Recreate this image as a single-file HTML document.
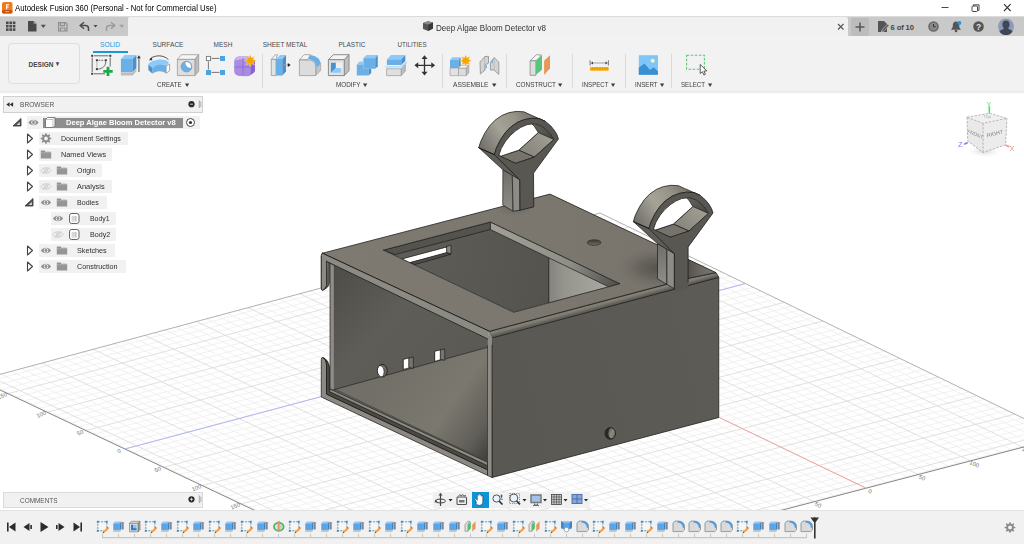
<!DOCTYPE html>
<html lang="en"><head><meta charset="utf-8"><title>Autodesk Fusion 360</title>
<style>
*{box-sizing:border-box;margin:0;padding:0}
html,body{width:1024px;height:544px;overflow:hidden;background:#fff}
body{font-family:"Liberation Sans",sans-serif;color:#3c3c3c;position:relative}
.abs{position:absolute}
#titlebar{left:0;top:0;width:1024px;height:16px;background:#fff}
#titlebar .t{left:14.5px;top:1.5px;line-height:12px;color:#000;white-space:nowrap;font-size:8.4px;transform:scaleX(0.931);transform-origin:0 50%}
#qbar{left:0;top:16px;width:1024px;height:20.5px;background:#c9c9c9;border-top:1px solid #dcdcdc}
#tab{left:128px;top:17px;width:720px;height:19px;background:#f1f1f1;border-radius:2px 2px 0 0}
#tab .t{left:307.5px;top:4.5px;line-height:12px;color:#333;white-space:nowrap;font-size:8.8px;transform:scaleX(0.9144);transform-origin:0 50%}
#plus{left:851px;top:18px;width:18px;height:18px;background:#bcbcbc;border-radius:2px}
#toolbar{left:0;top:36px;width:1024px;height:58px;background:linear-gradient(#f2f2f2 0,#f2f2f2 54px,#e8e8e8 56.3px,#fff 57.6px)}
.tabs span{position:absolute;top:39.5px;line-height:9px;color:#4a4a4a;white-space:nowrap}
.grp{position:absolute;top:80px;line-height:9px;color:#3c3c3c;white-space:nowrap}
.grp i{font-style:normal;font-size:6.5px;margin-left:4.5px;position:relative;top:-0.3px;display:inline-block;transform:scaleX(1.5)}
.sep{position:absolute;top:54px;width:1px;height:34px;background:#dadada}
#design{left:8px;top:43px;width:72px;height:41px;border:1px solid #dedede;border-radius:4px;background:#f3f3f3}
#design span{position:absolute;left:35px;top:15.5px;line-height:9px;font-weight:bold;color:#444;white-space:nowrap;font-size:7.8px;transform:translateX(-50%) scaleX(0.8359)}
.ico{position:absolute;overflow:visible}
.row{position:absolute;height:13px;background:#f1f1f1}
.row span{position:absolute;top:2px;line-height:9px;color:#2e2e2e;white-space:nowrap}
.phead{position:absolute;left:3px;width:199.5px;height:16.5px;background:#f1f1f1;border:1px solid #d0d0d0}
.phead span{position:absolute;left:15.5px;top:3px;line-height:9px;color:#555;white-space:nowrap}
#tl{left:0;top:510px;width:1024px;height:34px;background:#f1f1f1;border-top:1px solid #e2e2e2}
#nav{left:433px;top:492px;width:157px;height:16px;background:#f1f1f1}
</style></head><body>
<svg class="ico" style="left:0;top:93px" width="1024" height="417" viewBox="0 93 1024 417" font-family="Liberation Sans, sans-serif"><path d="M-15.5 382.6L605.5 215.7M-7.7 386.3L613.3 219.4M0.1 390L621.1 223.2M15.8 397.4L636.7 230.8M23.6 401.1L644.5 234.6M31.4 404.8L652.3 238.3M39.2 408.5L660.1 242.1M54.8 415.8L675.6 249.7M62.6 419.5L683.4 253.4M70.3 423.2L691.2 257.2M78.1 426.9L698.9 261M93.7 434.3L714.5 268.5M101.5 437.9L722.2 272.3M109.2 441.6L730 276M117 445.3L737.7 279.8M132.6 452.6L753.2 287.3M140.3 456.3L761 291.1M148.1 460L768.7 294.8M155.8 463.6L776.5 298.6M171.3 471L791.9 306.1M179.1 474.6L799.7 309.8M186.8 478.3L807.4 313.6M194.6 482L815.1 317.3M210 489.3L830.5 324.8M217.8 492.9L838.3 328.5M225.5 496.6L846 332.3M233.2 500.2L853.7 336M248.7 507.5L869.1 343.5M256.4 511.2L876.8 347.2M264.1 514.8L884.5 350.9M271.8 518.5L892.2 354.7M287.2 525.8L907.6 362.1M294.9 529.4L915.2 365.8M302.6 533.1L922.9 369.6M310.3 536.7L930.6 373.3M325.7 544L945.9 380.7M333.4 547.6L953.6 384.4M341 551.2L961.3 388.2M348.7 554.9L968.9 391.9M364.1 562.1L984.3 399.3M371.7 565.8L991.9 403M379.4 569.4L999.6 406.7M387.1 573L1007.2 410.4M402.4 580.3L1022.5 417.8M410.1 583.9L1030.1 421.5M417.7 587.5L1037.8 425.2M425.4 591.1L1045.4 428.9M440.6 598.4L1060.6 436.3M-19.5 379.6L443.5 598.6M1 374.1L464 593.3M11.2 371.3L474.2 590.6M21.5 368.6L484.4 587.9M31.7 365.8L494.7 585.2M52.2 360.3L515.1 579.9M62.5 357.5L525.4 577.2M72.8 354.8L535.6 574.5M83.1 352L545.9 571.9M103.6 346.5L566.4 566.5M113.9 343.7L576.7 563.8M124.2 341L587 561.1M134.5 338.2L597.3 558.4M155.1 332.6L617.8 553.1M165.4 329.9L628.1 550.4M175.7 327.1L638.4 547.7M186.1 324.3L648.7 545M206.7 318.8L669.4 539.6M217 316L679.7 536.9M227.4 313.2L690 534.2M237.7 310.4L700.3 531.5M258.4 304.9L721 526.1M268.8 302.1L731.3 523.4M279.2 299.3L741.7 520.7M289.5 296.5L752 518M310.3 290.9L772.8 512.6M320.7 288.1L783.1 509.9M331 285.3L793.5 507.2M341.4 282.5L803.9 504.4M362.2 276.9L824.6 499M372.6 274.1L835 496.3M383.1 271.3L845.4 493.6M393.5 268.5L855.8 490.9M414.3 262.9L876.6 485.4M424.8 260.1L887.1 482.7M435.2 257.3L897.5 480M445.6 254.5L907.9 477.3M466.5 248.9L928.8 471.8M477 246.1L939.2 469.1M487.4 243.3L949.6 466.4M497.9 240.5L960.1 463.6M518.9 234.8L981 458.2M529.3 232L991.5 455.4M539.8 229.2L1001.9 452.7M550.3 226.4L1012.4 450M571.3 220.7L1033.4 444.5M581.8 217.9L1043.8 441.7M592.3 215.1L1054.3 439" stroke="#eeeeee" stroke-width="0.8" fill="none"/><path d="M7.9 393.7L628.9 227M47 412.2L667.8 245.9M85.9 430.6L706.7 264.7M124.8 449L745.5 283.5M163.6 467.3L784.2 302.3M202.3 485.6L822.8 321M240.9 503.9L861.4 339.7M279.5 522.1L899.9 358.4M318 540.3L938.3 377M356.4 558.5L976.6 395.6M394.7 576.6L1014.8 414.1M433 594.7L1053 432.6M-9.2 376.8L453.7 595.9M42 363.1L504.9 582.6M93.3 349.3L556.2 569.2M144.8 335.4L607.5 555.7M196.4 321.5L659 542.3M248.1 307.6L710.7 528.8M299.9 293.7L762.4 515.3M351.8 279.7L814.3 501.7M403.9 265.7L866.2 488.2M456.1 251.7L918.3 474.5M508.4 237.6L970.5 460.9M560.8 223.5L1022.9 447.2" stroke="#dcdcdc" stroke-width="0.9" fill="none"/><polyline points="-21,380 600,213 1062,437" fill="none" stroke="#a8a8a8" stroke-width="0.9"/><polyline points="-21,380 442,599 1062,437" fill="none" stroke="#858585" stroke-width="1"/><path d="M124.8 449L745.5 283.5" stroke="#b2b6f6" stroke-width="1"/><path d="M403.9 265.7L866.2 488.2" stroke="#f2a3a3" stroke-width="1"/><text x="2.9" y="397.7" font-size="5.8" fill="#7a7a7a" text-anchor="middle" transform="rotate(-22 2.9 397.7)">150</text><text x="42" y="416.2" font-size="5.8" fill="#7a7a7a" text-anchor="middle" transform="rotate(-22 42 416.2)">100</text><text x="80.9" y="434.6" font-size="5.8" fill="#7a7a7a" text-anchor="middle" transform="rotate(-22 80.9 434.6)">50</text><text x="119.8" y="453" font-size="5.8" fill="#7a7a7a" text-anchor="middle" transform="rotate(-22 119.8 453)">0</text><text x="158.6" y="471.3" font-size="5.8" fill="#7a7a7a" text-anchor="middle" transform="rotate(-22 158.6 471.3)">50</text><text x="197.3" y="489.6" font-size="5.8" fill="#7a7a7a" text-anchor="middle" transform="rotate(-22 197.3 489.6)">100</text><text x="235.9" y="507.9" font-size="5.8" fill="#7a7a7a" text-anchor="middle" transform="rotate(-22 235.9 507.9)">150</text><text x="817.3" y="506.7" font-size="5.8" fill="#7a7a7a" text-anchor="middle" transform="rotate(25 817.3 506.7)">50</text><text x="869.2" y="493.2" font-size="5.8" fill="#7a7a7a" text-anchor="middle" transform="rotate(25 869.2 493.2)">0</text><text x="921.3" y="479.5" font-size="5.8" fill="#7a7a7a" text-anchor="middle" transform="rotate(25 921.3 479.5)">50</text><text x="973.5" y="465.9" font-size="5.8" fill="#7a7a7a" text-anchor="middle" transform="rotate(25 973.5 465.9)">100</text><text x="1025.9" y="452.2" font-size="5.8" fill="#7a7a7a" text-anchor="middle" transform="rotate(25 1025.9 452.2)">150</text><defs><linearGradient id="topg" gradientUnits="userSpaceOnUse" x1="330" y1="260" x2="700" y2="260"><stop offset="0" stop-color="#7e7a72"/><stop offset="0.6" stop-color="#7b776f"/><stop offset="1" stop-color="#78746c"/></linearGradient><radialGradient id="ao" gradientUnits="userSpaceOnUse" cx="658" cy="268" r="44" gradientTransform="translate(658 268) scale(1 0.5) translate(-658 -268)"><stop offset="0" stop-color="#4f4d48" stop-opacity="0.85"/><stop offset="0.45" stop-color="#55534e" stop-opacity="0.5"/><stop offset="1" stop-color="#77746c" stop-opacity="0"/></radialGradient><radialGradient id="ao1" gradientUnits="userSpaceOnUse" cx="515" cy="207" r="22" gradientTransform="translate(515 207) scale(1 0.45) translate(-515 -207)"><stop offset="0" stop-color="#55534e" stop-opacity="0.8"/><stop offset="1" stop-color="#77746c" stop-opacity="0"/></radialGradient><linearGradient id="rf" gradientUnits="userSpaceOnUse" x1="492" y1="400" x2="719" y2="340"><stop offset="0" stop-color="#5a5852"/><stop offset="1" stop-color="#5d5b55"/></linearGradient><linearGradient id="fil" gradientUnits="userSpaceOnUse" x1="600" y1="300" x2="602" y2="307.5"><stop offset="0" stop-color="#6c6961"/><stop offset="0.5" stop-color="#848177"/><stop offset="1" stop-color="#5c5a54"/></linearGradient><linearGradient id="wall" gradientUnits="userSpaceOnUse" x1="335" y1="270" x2="470" y2="390"><stop offset="0" stop-color="#4f4d48"/><stop offset="0.4" stop-color="#5f5d57"/><stop offset="1" stop-color="#5b5953"/></linearGradient><linearGradient id="floor" gradientUnits="userSpaceOnUse" x1="380" y1="380" x2="487" y2="455"><stop offset="0" stop-color="#726f68"/><stop offset="0.55" stop-color="#7b786f"/><stop offset="0.85" stop-color="#605e58"/><stop offset="1" stop-color="#454340"/></linearGradient><linearGradient id="cutwall" gradientUnits="userSpaceOnUse" x1="400" y1="260" x2="548" y2="300"><stop offset="0" stop-color="#5f5d57"/><stop offset="1" stop-color="#55534e"/></linearGradient><linearGradient id="brw" gradientUnits="userSpaceOnUse" x1="548" y1="280" x2="612" y2="280"><stop offset="0" stop-color="#82817b"/><stop offset="0.25" stop-color="#95948d"/><stop offset="1" stop-color="#acaba3"/></linearGradient><linearGradient id="brs" gradientUnits="userSpaceOnUse" x1="495" y1="230" x2="620" y2="285"><stop offset="0" stop-color="#a09f97"/><stop offset="0.6" stop-color="#8f8e87"/><stop offset="1" stop-color="#4e4c47"/></linearGradient><linearGradient id="ao2" gradientUnits="userSpaceOnUse" x1="688" y1="0" x2="714" y2="0"><stop offset="0" stop-color="#504e49" stop-opacity="0.9"/><stop offset="1" stop-color="#6b6962" stop-opacity="0.1"/></linearGradient></defs><polygon points="491.5,337.5 718.75,277.3 718.75,417.5 492,477.5" fill="url(#rf)" stroke="#1f1e1c" stroke-width="0.8" stroke-linejoin="round"/><clipPath id="rh"><ellipse cx="610.3" cy="433.4" rx="5.2" ry="5.8"/></clipPath><linearGradient id="rhg" x1="0" y1="0" x2="1" y2="0.3"><stop offset="0" stop-color="#55534e"/><stop offset="0.5" stop-color="#8e8c84"/><stop offset="1" stop-color="#5f5d57"/></linearGradient><ellipse cx="610.3" cy="433.4" rx="5.2" ry="5.8" fill="#2b2a27"/><g clip-path="url(#rh)"><ellipse cx="613.2" cy="432.6" rx="4.8" ry="6.2" fill="url(#rhg)" transform="rotate(12 613.2 432.6)"/></g><ellipse cx="610.3" cy="433.4" rx="5.2" ry="5.8" fill="none" stroke="#1e1e1c" stroke-width="0.9"/><polygon points="489.4,331.3 689.2,278.2 716,272.6 718.75,277.3 492,338" fill="url(#fil)" stroke="#1f1e1c" stroke-width="0.7" stroke-linejoin="round"/><polygon points="334.4,265.2 487.5,338.9 487.5,347.3 335,389.4" fill="url(#wall)"/><polygon points="335,389.4 487.5,347.3 487.5,461.3" fill="url(#floor)"/><polyline points="335,389.4 487.5,347.3" fill="none" stroke="#1f1e1c" stroke-width="0.8" stroke-linejoin="round" stroke-linecap="round"/><clipPath id="ch"><ellipse cx="382.3" cy="370.7" rx="5" ry="6.3"/></clipPath><ellipse cx="382.3" cy="370.7" rx="5" ry="6.3" fill="#6b6963"/><g clip-path="url(#ch)"><ellipse cx="379.8" cy="371.8" rx="4.3" ry="6.3" fill="#fff" stroke="#2a2926" stroke-width="0.7"/></g><ellipse cx="382.3" cy="370.7" rx="5" ry="6.3" fill="none" stroke="#1e1e1c" stroke-width="0.9"/><polygon points="403.5,359.4 408.8,358 408.8,367.4 403.5,368.8" fill="#ffffff"/><polygon points="408.8,358 413.3,356.9 413.3,368.4 408.8,367.4" fill="#77756e" stroke="#1f1e1c" stroke-width="0.7" stroke-linejoin="round"/><polyline points="403.2,369.2 403.2,359.4 408.8,358" fill="none" stroke="#1f1e1c" stroke-width="0.7" stroke-linejoin="round" stroke-linecap="round"/><polygon points="435,351.3 440.3,349.9 440.3,359.3 435,360.7" fill="#ffffff"/><polygon points="440.3,349.9 444.8,348.8 444.8,360.3 440.3,359.3" fill="#77756e" stroke="#1f1e1c" stroke-width="0.7" stroke-linejoin="round"/><polyline points="434.7,361.1 434.7,351.3 440.3,349.9" fill="none" stroke="#1f1e1c" stroke-width="0.7" stroke-linejoin="round" stroke-linecap="round"/><path d="M321.3 359.5 Q321.3 357 323.3 357.6 Q326.2 359.5 326.5 364 L326.5 394.07 L487.5 469.77 L487.5 475.37 L321.25 397 Z" fill="#8b8982" stroke="#1f1e1c" stroke-width="0.75" stroke-linejoin="round"/><path d="M323.3 357.6 Q328 360 329.4 366.5 L329.4 391.54 L487.5 465.67 L487.5 469.77 L326.5 394.07 L326.5 364 Q326.2 359.5 323.3 357.6 Z" fill="#4b4a45" stroke="#1f1e1c" stroke-width="0.9" stroke-linejoin="round"/><polygon points="329.4,391.54 487.5,465.67 487.5,462.17 330.5,388.96" fill="#8a8a82" stroke="#1f1e1c" stroke-width="0.7" stroke-linejoin="round"/><polygon points="330.5,388.96 487.5,462.17 487.5,461.3 335,389.4 334.4,389.2" fill="#6b6963" stroke="#1f1e1c" stroke-width="0.6" stroke-linejoin="round"/><polygon points="487.5,338.2 492,338 492,477.5 487.5,475.4" fill="#8e8c85" stroke="#1f1e1c" stroke-width="0.7" stroke-linejoin="round"/><polygon points="330,262.5 334.4,264.8 334.4,390.4 330,388.9" fill="#8e8c85" stroke="#1f1e1c" stroke-width="0.7" stroke-linejoin="round"/><path d="M321.3 256 L321.3 288 Q321.3 291 323.5 290 Q327.5 288.5 329.4 283.5 L329.4 262 L326.5 260.5 Z" fill="#5d5b55" stroke="#1f1e1c" stroke-width="0.7"/><path d="M321.3 255.5 Q321.3 253 323.5 253.4 L327.5 261.5 L326.5 285.5 Q325 289.5 322.5 290.3 Q321.3 290.3 321.3 288 Z" fill="#8b8b83"/><path d="M326.5 261.3 L326.5 285.5 Q325 289.5 322.5 290.3 Q321.3 290.3 321.3 288 L321.3 255.5 Q321.3 253.2 322.8 253.2" fill="none" stroke="#1f1e1c" stroke-width="0.8" stroke-linejoin="round"/><clipPath id="cut"><polygon points="383.5,250.1 490.4,222 620,283.75 513.75,312.25"/></clipPath><g clip-path="url(#cut)"><polygon points="383.5,250.1 490.4,222 620,283.75 513.75,312.25" fill="url(#cutwall)"/><polygon points="548.75,240 640,283 548.75,304" fill="url(#brw)"/><polyline points="548.75,250 548.75,304" fill="none" stroke="#1f1e1c" stroke-width="0.8" stroke-linejoin="round" stroke-linecap="round"/><polygon points="383.5,250.1 490.4,222 490.4,229.5 395,254.6" fill="#55534d" stroke="#1f1e1c" stroke-width="0.7" stroke-linejoin="round"/><polygon points="490.4,222 620,283.75 609,286.95 490.4,229.5" fill="url(#brs)" stroke="#1f1e1c" stroke-width="0.7" stroke-linejoin="round"/><polygon points="402.3,258.9 446.6,247.3 446.6,252.6 409.8,262.6" fill="#ffffff"/><polygon points="446.6,246.4 451,245.2 451,253.9 446.6,252.6" fill="#8a8880" stroke="#1f1e1c" stroke-width="0.7" stroke-linejoin="round"/><polygon points="409.8,262.6 446.6,252.6 451,254.3 414.8,264.6" fill="#4d4b46" stroke="#1f1e1c" stroke-width="0.7" stroke-linejoin="round"/><polyline points="398,260 446.6,247" fill="none" stroke="#1f1e1c" stroke-width="0.7" stroke-linejoin="round" stroke-linecap="round"/></g><path d="M322.5,253.2 L489.4,331.3 L689.2,278.2 L716,272.6 L550,194.1Z M383.5,250.1 L490.4,222 L620,283.75 L513.75,312.25Z" fill="url(#topg)" fill-rule="evenodd"/><clipPath id="topc"><path d="M322.5,253.2 L489.4,331.3 L689.2,278.2 L716,272.6 L550,194.1Z M383.5,250.1 L490.4,222 L620,283.75 L513.75,312.25Z" clip-rule="evenodd"/></clipPath><g clip-path="url(#topc)"><rect x="600" y="235" width="120" height="60" fill="url(#ao)"/><polygon points="688,258 716.5,272.6 688,279" fill="url(#ao2)"/><rect x="480" y="190" width="70" height="30" fill="url(#ao1)"/></g><polyline points="322.5,253.2 489.4,331.3 689.2,278.2 716,272.6 550,194.1 322.5,253.2" fill="none" stroke="#1f1e1c" stroke-width="0.8" stroke-linejoin="round" stroke-linecap="round"/><polyline points="383.5,250.1 490.4,222 620,283.75 513.75,312.25 383.5,250.1" fill="none" stroke="#1f1e1c" stroke-width="0.8" stroke-linejoin="round" stroke-linecap="round"/><linearGradient id="thg" x1="0" y1="0" x2="0" y2="1"><stop offset="0" stop-color="#3f3e3a"/><stop offset="0.55" stop-color="#55534e"/><stop offset="1" stop-color="#75736b"/></linearGradient><ellipse cx="594.1" cy="242.6" rx="6.8" ry="2.8" fill="url(#thg)" stroke="#2a2926" stroke-width="0.7"/><polygon points="489.4,331.3 492.3,338.3 492,345 487.5,345 487.5,338" fill="#8c8b84"/><polygon points="322.5,253.2 489.4,331.3 487.5,338.9 326.3,261.3" fill="#8b8b83"/><polyline points="322.5,253.2 489.4,331.3" fill="none" stroke="#1f1e1c" stroke-width="0.95" stroke-linejoin="round" stroke-linecap="round"/><polyline points="326.5,261.4 487.5,338.9" fill="none" stroke="#1f1e1c" stroke-width="0.95" stroke-linejoin="round" stroke-linecap="round"/><polygon points="494.4,154.6 519.8,179.85 502.9,169.85 478.8,147.7" fill="#5f5d57" stroke="#1f1e1c" stroke-width="0.7" stroke-linejoin="round"/><linearGradient id="stg1" x1="0" y1="0" x2="0" y2="1"><stop offset="0" stop-color="#6f6e68"/><stop offset="1" stop-color="#8f8e88"/></linearGradient><polygon points="502.9,169.85 512.3,175.4 513.1,211.2 502.75,205" fill="url(#stg1)" stroke="#1f1e1c" stroke-width="0.7" stroke-linejoin="round"/><polygon points="512.3,175.4 519.8,179.85 520,210.2 513.1,211.2" fill="#8d8c86" stroke="#1f1e1c" stroke-width="0.7" stroke-linejoin="round"/><linearGradient id="og1" gradientUnits="userSpaceOnUse" x1="478.4" y1="144.6" x2="545.4" y2="99.4"><stop offset="0" stop-color="#716f68"/><stop offset="0.12" stop-color="#83817a"/><stop offset="0.33" stop-color="#a5a297"/><stop offset="0.55" stop-color="#979489"/><stop offset="0.8" stop-color="#716f68"/><stop offset="1" stop-color="#585650"/></linearGradient><polygon points="478.8,147.7 480.7,141.45 485.05,132.7 489.8,125.7 495.05,120.2 501.8,115.5 508.8,112.7 516.3,111.4 523.8,111.8 529.8,114.5 545.4,121.4 539.4,118.7 531.9,118.3 524.4,119.6 517.4,122.4 510.65,127.1 505.4,132.6 500.65,139.6 496.3,148.35 494.4,154.6" fill="url(#og1)" stroke="#1f1e1c" stroke-width="0.8" stroke-linejoin="round"/><path d="M494.4,154.6 L496.3,148.35 L500.65,139.6 L505.4,132.6 L510.65,127.1 L517.4,122.4 L524.4,119.6 L531.9,118.3 L539.4,118.7 L545.4,121.4 L550.65,125.85 L554.4,130.4 L556.9,134.6 L558.4,139 L533.5,173.1 L533.75,206.9 L520,210.2 L519.8,179.85Z M498.8,155.4 L501.3,148.35 L505.65,141.1 L510.4,135.4 L515.65,130.85 L520.9,127.3 L526.9,124.7 L534.4,123.6 L541.9,126.3 L546.4,129.7 L549.9,133.1 L553.9,139.5 L534.4,157.1 L515.65,163.35Z" fill="#595751" fill-rule="evenodd"/><clipPath id="rc1"><polygon points="498.8,155.4 501.3,148.35 505.65,141.1 510.4,135.4 515.65,130.85 520.9,127.3 526.9,124.7 534.4,123.6 541.9,126.3 546.4,129.7 549.9,133.1 553.9,139.5 534.4,157.1 515.65,163.35"/></clipPath><g clip-path="url(#rc1)"><polygon points="498.8,155.4 501.3,148.35 505.65,141.1 510.4,135.4 515.65,130.85 520.9,127.3 526.9,124.7 534.4,123.6 541.9,126.3 546.4,129.7 549.9,133.1 553.9,139.5 534.4,157.1 515.65,163.35" fill="#4b4944"/><linearGradient id="ic1" gradientUnits="userSpaceOnUse" x1="534.4" y1="123.6" x2="553.9" y2="139.5"><stop offset="0" stop-color="#65635d"/><stop offset="1" stop-color="#45433f"/></linearGradient><polygon points="498.8,155.4 501.3,148.35 505.65,141.1 510.4,135.4 515.65,130.85 520.9,127.3 526.9,124.7 534.4,123.6 541.9,126.3 546.4,129.7 549.9,133.1 553.9,139.5 534.4,157.1 515.65,163.35" fill="url(#ic1)"/><linearGradient id="fb1" gradientUnits="userSpaceOnUse" x1="534.4" y1="157.1" x2="553.9" y2="139.5"><stop offset="0" stop-color="#8c8a80"/><stop offset="1" stop-color="#a19e93"/></linearGradient><polygon points="553.9,139.5 534.4,157.1 518.8,150.2 538.3,132.6" fill="url(#fb1)" stroke="#1f1e1c" stroke-width="0.7" stroke-linejoin="round"/><polygon points="534.4,157.1 515.65,163.35 500.05,156.45 518.8,150.2" fill="#75736c" stroke="#1f1e1c" stroke-width="0.7" stroke-linejoin="round"/><polygon points="483.2,148.5 485.7,141.45 490.05,134.2 494.8,128.5 500.05,123.95 505.3,120.4 511.3,117.8 518.8,116.7 526.3,119.4 530.8,122.8 534.3,126.2 538.3,132.6 518.8,150.2 500.05,156.45" fill="#ffffff" stroke="#1f1e1c" stroke-width="0.8" stroke-linejoin="round"/></g><polyline points="498.8,155.4 501.3,148.35 505.65,141.1 510.4,135.4 515.65,130.85 520.9,127.3 526.9,124.7 534.4,123.6 541.9,126.3 546.4,129.7 549.9,133.1 553.9,139.5 534.4,157.1 515.65,163.35 498.8,155.4" fill="none" stroke="#1f1e1c" stroke-width="0.8" stroke-linejoin="round" stroke-linecap="round"/><polyline points="478.8,147.7 494.4,154.6 494.4,154.6 496.3,148.35 500.65,139.6 505.4,132.6 510.65,127.1 517.4,122.4 524.4,119.6 531.9,118.3 539.4,118.7 545.4,121.4 550.65,125.85 554.4,130.4 556.9,134.6 558.4,139 533.5,173.1 533.75,206.9 520,210.2" fill="none" stroke="#1f1e1c" stroke-width="0.8" stroke-linejoin="round" stroke-linecap="round"/><polyline points="494.4,154.6 519.8,179.85 520,210.2" fill="none" stroke="#1f1e1c" stroke-width="0.8" stroke-linejoin="round" stroke-linecap="round"/><polygon points="649,228.5 674.4,253.75 657.5,243.75 633.4,221.6" fill="#5f5d57" stroke="#1f1e1c" stroke-width="0.7" stroke-linejoin="round"/><linearGradient id="stg2" x1="0" y1="0" x2="0" y2="1"><stop offset="0" stop-color="#6f6e68"/><stop offset="1" stop-color="#8f8e88"/></linearGradient><polygon points="657.5,243.75 666.9,249.3 666.9,284.4 657.5,278.75" fill="url(#stg2)" stroke="#1f1e1c" stroke-width="0.7" stroke-linejoin="round"/><polygon points="666.9,249.3 674.4,253.75 674.4,288.75 666.9,284.4" fill="#8d8c86" stroke="#1f1e1c" stroke-width="0.7" stroke-linejoin="round"/><linearGradient id="og2" gradientUnits="userSpaceOnUse" x1="633" y1="218.5" x2="700" y2="173.3"><stop offset="0" stop-color="#716f68"/><stop offset="0.12" stop-color="#83817a"/><stop offset="0.33" stop-color="#a5a297"/><stop offset="0.55" stop-color="#979489"/><stop offset="0.8" stop-color="#716f68"/><stop offset="1" stop-color="#585650"/></linearGradient><polygon points="633.4,221.6 635.3,215.35 639.65,206.6 644.4,199.6 649.65,194.1 656.4,189.4 663.4,186.6 670.9,185.3 678.4,185.7 684.4,188.4 700,195.3 694,192.6 686.5,192.2 679,193.5 672,196.3 665.25,201 660,206.5 655.25,213.5 650.9,222.25 649,228.5" fill="url(#og2)" stroke="#1f1e1c" stroke-width="0.8" stroke-linejoin="round"/><path d="M649,228.5 L650.9,222.25 L655.25,213.5 L660,206.5 L665.25,201 L672,196.3 L679,193.5 L686.5,192.2 L694,192.6 L700,195.3 L705.25,199.75 L709,204.3 L711.5,208.5 L713,212.9 L688.1,247 L688.1,288.5 L674.4,291.75 L674.4,253.75Z M653.4,229.3 L655.9,222.25 L660.25,215 L665,209.3 L670.25,204.75 L675.5,201.2 L681.5,198.6 L689,197.5 L696.5,200.2 L701,203.6 L704.5,207 L708.5,213.4 L689,231 L670.25,237.25Z" fill="#595751" fill-rule="evenodd"/><clipPath id="rc2"><polygon points="653.4,229.3 655.9,222.25 660.25,215 665,209.3 670.25,204.75 675.5,201.2 681.5,198.6 689,197.5 696.5,200.2 701,203.6 704.5,207 708.5,213.4 689,231 670.25,237.25"/></clipPath><g clip-path="url(#rc2)"><polygon points="653.4,229.3 655.9,222.25 660.25,215 665,209.3 670.25,204.75 675.5,201.2 681.5,198.6 689,197.5 696.5,200.2 701,203.6 704.5,207 708.5,213.4 689,231 670.25,237.25" fill="#4b4944"/><linearGradient id="ic2" gradientUnits="userSpaceOnUse" x1="689" y1="197.5" x2="708.5" y2="213.4"><stop offset="0" stop-color="#65635d"/><stop offset="1" stop-color="#45433f"/></linearGradient><polygon points="653.4,229.3 655.9,222.25 660.25,215 665,209.3 670.25,204.75 675.5,201.2 681.5,198.6 689,197.5 696.5,200.2 701,203.6 704.5,207 708.5,213.4 689,231 670.25,237.25" fill="url(#ic2)"/><linearGradient id="fb2" gradientUnits="userSpaceOnUse" x1="689" y1="231" x2="708.5" y2="213.4"><stop offset="0" stop-color="#8c8a80"/><stop offset="1" stop-color="#a19e93"/></linearGradient><polygon points="708.5,213.4 689,231 673.4,224.1 692.9,206.5" fill="url(#fb2)" stroke="#1f1e1c" stroke-width="0.7" stroke-linejoin="round"/><polygon points="689,231 670.25,237.25 654.65,230.35 673.4,224.1" fill="#75736c" stroke="#1f1e1c" stroke-width="0.7" stroke-linejoin="round"/><polygon points="637.8,222.4 640.3,215.35 644.65,208.1 649.4,202.4 654.65,197.85 659.9,194.3 665.9,191.7 673.4,190.6 680.9,193.3 685.4,196.7 688.9,200.1 692.9,206.5 673.4,224.1 654.65,230.35" fill="#ffffff" stroke="#1f1e1c" stroke-width="0.8" stroke-linejoin="round"/></g><polyline points="653.4,229.3 655.9,222.25 660.25,215 665,209.3 670.25,204.75 675.5,201.2 681.5,198.6 689,197.5 696.5,200.2 701,203.6 704.5,207 708.5,213.4 689,231 670.25,237.25 653.4,229.3" fill="none" stroke="#1f1e1c" stroke-width="0.8" stroke-linejoin="round" stroke-linecap="round"/><polyline points="633.4,221.6 649,228.5 649,228.5 650.9,222.25 655.25,213.5 660,206.5 665.25,201 672,196.3 679,193.5 686.5,192.2 694,192.6 700,195.3 705.25,199.75 709,204.3 711.5,208.5 713,212.9 688.1,247 688.1,282" fill="none" stroke="#1f1e1c" stroke-width="0.8" stroke-linejoin="round" stroke-linecap="round"/><polyline points="649,228.5 674.4,253.75 674.4,288.75" fill="none" stroke="#1f1e1c" stroke-width="0.8" stroke-linejoin="round" stroke-linecap="round"/><defs><filter id="cb" x="-10%" y="-10%" width="120%" height="120%"><feGaussianBlur stdDeviation="0.35"/></filter><radialGradient id="csh"><stop offset="0" stop-color="#bbb" stop-opacity="0.6"/><stop offset="1" stop-color="#fff" stop-opacity="0"/></radialGradient></defs><ellipse cx="984.4" cy="151.2" rx="19" ry="7" fill="url(#csh)"/><g filter="url(#cb)"><polygon points="967,117.2 989.5,113.3 1006.9,118.4 983.1,123.3" fill="#f0f0f0"/><polygon points="967,117.2 983.1,123.3 983.1,152.5 967.7,141" fill="#e9e9e9"/><polygon points="983.1,123.3 1006.9,118.4 1005.6,144.8 983.1,152.5" fill="#ececec"/><path d="M967,117.2 L989.5,113.3 L1006.9,118.4 L983.1,123.3Z M967,117.2 L967.7,141 L983.1,152.5 L1005.6,144.8 L1006.9,118.4 M983.1,123.3 L983.1,152.5" fill="none" stroke="#a8a8a8" stroke-width="0.8" stroke-dasharray="2.5 1.3"/><text x="974.7" y="135.8" font-size="4.8" fill="#8a8a8a" text-anchor="middle" transform="rotate(22 974.7 135.8)">FRONT</text><text x="995.3" y="135.2" font-size="5.3" fill="#777" text-anchor="middle" transform="rotate(-14 995.3 135.2)">RIGHT</text><text x="987" y="118.2" font-size="3.8" fill="#aaa" text-anchor="middle" transform="rotate(12 987 118.2)">TOP</text><path d="M989.3 113.3L989.3 106.2" stroke="#5fd86a" stroke-width="1.6"/><path d="M967.7 142.6L964.2 144.2" stroke="#7b7ff0" stroke-width="1.6"/><path d="M1005.6 145.2L1009.5 146.7" stroke="#f09090" stroke-width="1.6"/><text x="988.9" y="106.9" font-size="6.5" fill="#5fd86a" text-anchor="middle">Y</text><text x="960.3" y="147" font-size="7.5" fill="#7b7ff0" text-anchor="middle">Z</text><text x="1012" y="150.6" font-size="7.5" fill="#f09090" text-anchor="middle">X</text></g></svg>

<div id="titlebar" class="abs">
<svg class="ico" style="left:2px;top:2px" width="11" height="12" viewBox="0 0 11 12"><rect x="0" y="0" width="10.5" height="11.5" rx="2" fill="#f27a1a"/><rect x="0" y="8" width="10.5" height="3.5" rx="1.5" fill="#c9520c"/><path d="M4 2.2h3v1.1H5.2v1.1h1.5v1.1H5.2v1.8H4z" fill="#fff"/><rect x="3.2" y="9" width="4" height="1.2" fill="#e8a060"/></svg>
<div class="abs t">Autodesk Fusion 360 (Personal - Not for Commercial Use)</div>
<svg class="ico" style="left:938px;top:2px" width="80" height="12" viewBox="0 0 80 12" fill="none" stroke="#333" stroke-width=".9"><path d="M3.5 5.5h7"/><rect x="34" y="4" width="5.5" height="5.5" rx="1" /><path d="M35.5 4v-1.2h5.5v5.5h-1.3"/><path d="M66 2.2l6.6 6.8M72.6 2.2l-6.6 6.8" stroke-width="1.1"/></svg>
</div>

<div id="qbar" class="abs"></div>
<div id="tab" class="abs">
<svg class="ico" style="left:294px;top:3px" width="12" height="12" viewBox="0 0 12 12"><path d="M1 3l5-1.8 5 1.3v6L6.2 11 1 9z" fill="#555"/><path d="M1 3l5.2 1.7L11 2.5 6 1.2z" fill="#8a8a8a"/><path d="M6.2 4.7V11L11 8.5v-6z" fill="#3a3a3a"/></svg>
<div class="abs t">Deep Algae Bloom Detector v8</div>
<svg class="ico" style="left:709px;top:6px" width="8" height="8" viewBox="0 0 8 8" stroke="#555" stroke-width="1.1"><path d="M1 1l5.5 5.5M6.5 1L1 6.5"/></svg>
</div>
<div id="plus" class="abs"><svg class="ico" style="left:4px;top:4px" width="10" height="10" viewBox="0 0 10 10" stroke="#5a5a5a" stroke-width="1.6"><path d="M5 0.5v9M0.5 5h9"/></svg></div>
<!-- quick access icons -->
<svg class="ico" style="left:0;top:17px" width="128" height="19" viewBox="0 0 128 19">
<g fill="#4a4a4a"><rect x="6" y="4.5" width="2.6" height="2.6"/><rect x="9.4" y="4.5" width="2.6" height="2.6"/><rect x="12.8" y="4.5" width="2.6" height="2.6"/><rect x="6" y="7.9" width="2.6" height="2.6"/><rect x="9.4" y="7.9" width="2.6" height="2.6"/><rect x="12.8" y="7.9" width="2.6" height="2.6"/><rect x="6" y="11.3" width="2.6" height="2.6"/><rect x="9.4" y="11.3" width="2.6" height="2.6"/><rect x="12.8" y="11.3" width="2.6" height="2.6"/></g>
<path d="M28 4h5.5l3 3v7.5H28z" fill="#4a4a4a"/><path d="M33.5 4v3h3z" fill="#8c8c8c"/>
<path d="M40.8 7.8h5l-2.5 3.1z" fill="#4f4f4f"/>
<g fill="none" stroke="#8e8e8e" stroke-width="1.2"><path d="M58.6 5.6h7l1.4 1.4v7h-8.4z"/><path d="M60.5 5.6v3h4v-3M60.5 14v-3h4.5v3"/></g>
<path d="M81 8.5h4.5a3 3 0 0 1 3 3v2.5" fill="none" stroke="#4a4a4a" stroke-width="1.5"/><path d="M84 5.2L80.2 8.5 84 11.8" fill="none" stroke="#4a4a4a" stroke-width="1.5"/>
<path d="M93.5 8h4l-2 2.6z" fill="#4a4a4a"/>
<path d="M114 8.5h-4.5a3 3 0 0 0-3 3v2.5" fill="none" stroke="#9a9a9a" stroke-width="1.4"/><path d="M111 5.2l3.8 3.3-3.8 3.3" fill="none" stroke="#9a9a9a" stroke-width="1.4"/>
<path d="M119.3 7.8h5l-2.5 3.1z" fill="#a2a2a2"/>
</svg>
<!-- right side status icons -->
<svg class="ico" style="left:874px;top:17px" width="150" height="19" viewBox="0 0 150 19">
<path d="M4 4h6l3 3v8H4z" fill="#555"/><path d="M8 13l5.5-6 1.5 1.5-5.5 6-2 .500z" fill="#555" stroke="#c9c9c9" stroke-width=".7"/>
<text x="16.5" y="12.6" font-family="Liberation Sans, sans-serif" font-size="7.6" font-weight="bold" fill="#444" letter-spacing="-0.1">6 of 10</text>
<circle cx="59.5" cy="9.5" r="5.3" fill="#6a6a6a"/><circle cx="59.5" cy="9.5" r="3.7" fill="#8a8a8a"/><path d="M59.5 7v2.8h2.2" fill="none" stroke="#333" stroke-width="1"/>
<path d="M82 4.5c2.3 0 3.2 1.8 3.2 4 0 1.8.600 2.8 1.5 3.6v.700h-9.4v-.700c.900-.800 1.5-1.8 1.5-3.6 0-2.2.900-4 3.2-4z" fill="#555"/><circle cx="82" cy="14" r="1.3" fill="#555"/><circle cx="85.3" cy="6" r="2" fill="#1a9be0"/>
<circle cx="104.5" cy="9.5" r="5.3" fill="#555"/><text x="104.5" y="12.7" text-anchor="middle" font-family="Liberation Sans, sans-serif" font-size="8.5" font-weight="bold" fill="#e0e0e0">?</text>
<circle cx="132" cy="9.5" r="8" fill="#8e9bb8"/><path d="M132 3.5c2.4 0 3.6 1.7 3.6 3.9 0 1.5-.500 2.6-1.2 3.3v1.3c1.8.500 3.5 1.4 4.2 2.6a8 8 0 0 1-13.2 0c.700-1.2 2.4-2.1 4.2-2.6v-1.3c-.700-.700-1.2-1.8-1.2-3.3 0-2.2 1.2-3.9 3.6-3.9z" fill="#3f4756"/>
</svg>

<div id="toolbar" class="abs"></div>
<div class="tabs">
<span style="left:110px;color:#1a97d9;font-size:7.8px;transform:translateX(-50%) scaleX(0.8545)">SOLID</span>
<span style="left:167.5px;font-size:7.8px;transform:translateX(-50%) scaleX(0.8417)">SURFACE</span>
<span style="left:223px;font-size:7.8px;transform:translateX(-50%) scaleX(0.8322)">MESH</span>
<span style="left:285px;font-size:7.8px;transform:translateX(-50%) scaleX(0.8327)">SHEET METAL</span>
<span style="left:352px;font-size:7.8px;transform:translateX(-50%) scaleX(0.8308)">PLASTIC</span>
<span style="left:411.5px;font-size:7.8px;transform:translateX(-50%) scaleX(0.8034)">UTILITIES</span>
</div>
<div class="abs" style="left:93px;top:51px;width:35px;height:2px;background:#1a97d9"></div>
<div id="design" class="abs"><span>DESIGN <i style="font-style:normal;font-size:6.5px;position:relative;top:-0.5px;margin-left:1px">&#9662;</i></span></div>
<div class="grp" style="left:157px;font-size:7.8px;transform:scaleX(0.7891);transform-origin:0 50%">CREATE<i>&#9662;</i></div>
<div class="grp" style="left:335.5px;font-size:7.8px;transform:scaleX(0.8078);transform-origin:0 50%">MODIFY<i>&#9662;</i></div>
<div class="grp" style="left:452.75px;font-size:7.8px;transform:scaleX(0.8443);transform-origin:0 50%">ASSEMBLE<i>&#9662;</i></div>
<div class="grp" style="left:516.25px;font-size:7.8px;transform:scaleX(0.8171);transform-origin:0 50%">CONSTRUCT<i>&#9662;</i></div>
<div class="grp" style="left:582px;font-size:7.8px;transform:scaleX(0.7841);transform-origin:0 50%">INSPECT<i>&#9662;</i></div>
<div class="grp" style="left:635px;font-size:7.8px;transform:scaleX(0.7908);transform-origin:0 50%">INSERT<i>&#9662;</i></div>
<div class="grp" style="left:680.75px;font-size:7.8px;transform:scaleX(0.7909);transform-origin:0 50%">SELECT<i>&#9662;</i></div>
<div class="sep" style="left:262px"></div><div class="sep" style="left:441.5px"></div><div class="sep" style="left:506px"></div>
<div class="sep" style="left:572px"></div><div class="sep" style="left:625px"></div><div class="sep" style="left:671px"></div>
<svg class="ico" style="left:0;top:36px" width="1024" height="57" viewBox="0 36 1024 57">
<!-- 1 create sketch -->
<g fill="none" stroke="#5a5a5a" stroke-width=".9">
<path d="M94 55.8h14.5M92.2 57.5v14.5M94 73.8h11M110.2 57.5v9"/>
<path d="M98.5 60.3h6" stroke-dasharray="1.8 1"/><path d="M96.9 62v5.5" stroke="#aaa"/><path d="M105.8 61.5c0 4.5-3.5 7.3-7.5 7.6"/>
</g>
<g fill="#3c3c3c"><rect x="91.2" y="54.8" width="2" height="2"/><rect x="109.3" y="54.8" width="2" height="2"/><rect x="91.2" y="72.8" width="2" height="2"/><rect x="95.9" y="59.3" width="2" height="2"/><rect x="104.8" y="59.3" width="2" height="2"/><rect x="95.9" y="68.1" width="2" height="2"/></g>
<path d="M108 66.7v9.4M103.3 71.4h9.4" stroke="#1fa84a" stroke-width="2.8"/>
<!-- 2 extrude -->
<path d="M120.9 59.1l3.8-4.1h11.7l-3.7 4.1z" fill="#8ccafc"/><path d="M120.9 59.1h11.8v13.1h-11.8z" fill="#6aafe6"/><path d="M132.7 59.1l3.7-4.1v13.1l-3.7 4.1z" fill="#4a90cf"/>
<path d="M120.9 72.5h11.8l3.7-4.1v2.8l-3.7 4.4h-11.8z" fill="#bdbdbd"/>
<path d="M138.9 58v13.9" stroke="#8e8e8e" stroke-width="1.6"/><path d="M137 58.2l1.9-3 1.9 3z" fill="#333"/>
<!-- 3 revolve -->
<path d="M148.4 64.4c1-4 17-8 20.6-1.6l-2.8 3.5c-3-3-10-3-13.8 1.8z" fill="#8ccafc"/>
<path d="M152.4 68.1c3.8-4.8 10.8-4.8 13.8-1.8l-.3 7c-3.5-2.8-10-2.8-13.5.5z" fill="#6aafe6"/>
<path d="M148.4 64.4l4 3.7v5.7l-4-3.8z" fill="#4a90cf"/>
<path d="M166.2 66.3l3.4-2.2v6.5l-3.4 2.8z" fill="#fff" stroke="#777" stroke-width=".6"/>
<path d="M168.4 59.7c-4.5-5-13.5-5-18.5-.8" fill="none" stroke="#444" stroke-width=".9"/><path d="M148.8 60.3l3-2.6.5 2.6z" fill="#333"/>
<!-- 4 hole -->
<path d="M177.4 59.4l4-4.7h17.3l-3.8 4.7z" fill="#f5f5f5" stroke="#999" stroke-width=".8" stroke-linejoin="round"/><path d="M194.9 59.4l3.8-4.7v16.5l-3.8 4.4z" fill="#bdbdbd" stroke="#999" stroke-width=".8" stroke-linejoin="round"/><path d="M177.4 59.4h17.5v16.2h-17.5z" fill="#dedede" stroke="#999" stroke-width=".8" stroke-linejoin="round"/>
<circle cx="186.5" cy="66.6" r="5.3" fill="#6aafe6" stroke="#999" stroke-width="1"/><path d="M185.5 62.2a4.6 4.6 0 0 1 5.5 5.6c-3 .3-5.7-2.3-5.5-5.6z" fill="#fff"/>
<!-- 5 pattern -->
<path d="M211.5 58.4h8M208.4 61.5v8M211.5 72.4h8" stroke="#777" stroke-width="1" fill="none"/>
<rect x="206.4" y="56.4" width="4.2" height="4.2" fill="#fff" stroke="#777" stroke-width=".9"/><rect x="220" y="56" width="5" height="5" fill="#4da3e0"/><rect x="206" y="70" width="5" height="5" fill="#4da3e0"/><rect x="220" y="70" width="5" height="5" fill="#4da3e0"/>
<!-- 6 form -->
<path d="M234.2 62c0-3 1.5-5 4-5.5l6-.5c3-.2 5 .5 6.5 1.5l3 2.5c1 1 1.3 2 1.3 3.5v6c0 1.5-.5 2.5-1.5 3.3l-3.5 2.7c-1 .6-2 .8-3.5.7l-7-.2c-3-.2-5.3-2-5.3-5z" fill="#a98be3"/>
<path d="M250.7 61.5l4.3-1.5v9.5c0 1.5-.5 2.5-1.5 3.3l-2.8 2.2z" fill="#8a63cf"/>
<path d="M235.5 58.5c2.5-2 6-2.5 9-2.5 3 0 5 .8 6.2 1.7l-1.5 2.3c-3.5-1-9-1-13.7.5z" fill="#c9b5f0"/>
<path d="M243 58v17.5M234.5 67h16" stroke="#8d6bd0" stroke-width=".8" fill="none"/>
<path d="M250.3 54.7l1.2 3.1 3-1.4-1.3 3 3.1 1.3-3.1 1.2 1.3 3.1-3-1.4-1.2 3.1-1.2-3.1-3 1.4 1.3-3.1-3.1-1.2 3.1-1.3-1.3-3 3 1.4z" fill="#f7a500" stroke="#fbe3b0" stroke-width=".4"/>
<!-- 7 press pull -->
<path d="M271.3 59.4l4.1-4.7h2l-1.4 4.7z" fill="#f5f5f5" stroke="#999" stroke-width=".8" stroke-linejoin="round"/><path d="M271.3 59.4h4.7v16.2h-4.7z" fill="#e2e2e2" stroke="#999" stroke-width=".8" stroke-linejoin="round"/>
<path d="M276 59l4.1-4h5.9l-3.7 4z" fill="#8ccafc"/><path d="M276 59h6.3v16.6h-6.3z" fill="#6aafe6"/><path d="M282.3 59l3.7-4v16.6l-3.7 4z" fill="#4a90cf"/>
<path d="M284.2 65h4" stroke="#aaa" stroke-width="1.3"/><path d="M287.8 63l2.8 2-2.8 2z" fill="#222"/>
<!-- 8 fillet -->
<path d="M299.4 60l4.7-5.3h6.3l-2.5 4.8z" fill="#f5f5f5" stroke="#999" stroke-width=".8" stroke-linejoin="round"/>
<path d="M315.7 68.1l5-4.7v7.2l-5 5z" fill="#c4c4c4" stroke="#999" stroke-width=".6" stroke-linejoin="round"/>
<path d="M299.4 60h9.6c4.5 .3 6.7 3.5 6.7 8.1v7.5h-16.3z" fill="#dcdcdc" stroke="#999" stroke-width=".8" stroke-linejoin="round"/>
<path d="M310.4 54.9c6 1 10 4 10.3 8.5l-4.3 4.1c-.5-5-3-7.7-8.5-8.4z" fill="#6aafe6"/>
<!-- 9 shell -->
<path d="M328.4 59.7l5-5h15.6l-4.7 5z" fill="#f5f5f5" stroke="#8c8c8c" stroke-width="1" stroke-linejoin="round"/><path d="M344.3 59.7l4.7-5v15.9l-4.7 5z" fill="#c0c0c0" stroke="#8c8c8c" stroke-width="1" stroke-linejoin="round"/><path d="M328.4 59.7h15.9v15.9h-15.9z" fill="#e2e2e2" stroke="#8c8c8c" stroke-width="1" stroke-linejoin="round"/>
<path d="M330.9 62.8h5v5.3l-5 4.7z" fill="#4a90cf"/><path d="M330.9 72.8l5-4.7h5v4.7z" fill="#8ccafc"/><path d="M335.9 62.8h6.2v5.3h-6.2z" fill="#f0f0f0"/>
<!-- 10 combine -->
<path d="M363.4 58.1l3.1-3.1h11.25l-2.5 3.1z" fill="#8ccafc"/><path d="M363.4 58.1h11.85v10.65h-11.85z" fill="#6aafe6"/><path d="M375.25 58.1l2.5-3.1v11.25l-2.5 2.5z" fill="#4a90cf"/>
<path d="M356.8 64.4l2.8-2.8h3.8v2.8z" fill="#8ccafc"/><path d="M356.8 64.4h6.6v4.35h5.3v6.85h-11.9z" fill="#6aafe6"/><path d="M368.7 68.75h2.3l-2.3 2.5z M368.7 68.75l2.5 0 0 4.3-2.5 2.55z" fill="#4a90cf"/>
<!-- 11 split -->
<path d="M386.9 59.4l4-4.4h14.4l-4 4.4z" fill="#8ccafc"/><path d="M386.9 59.4h14.4v5.6h-14.4z" fill="#6aafe6"/><path d="M401.3 59.4l4-4.4v6l-4 4z" fill="#4a90cf"/>
<path d="M386.6 68.75h14.7v6.85h-14.7z" fill="#e0e0e0" stroke="#999" stroke-width=".7"/><path d="M401.3 68.75l4-4.3v6.6l-4 4.5z" fill="#bdbdbd" stroke="#999" stroke-width=".7"/>
<path d="M385.3 66.9l16.3-.3 5.3-4.7" fill="none" stroke="#a9d4f5" stroke-width="1.4"/>
<!-- 12 move -->
<path d="M424.5 57.5v15.6M417 65.3h15.5" stroke="#333" stroke-width="1.3"/><path d="M421.5 59l3-3.8 3 3.8zM421.5 71.8l3 3.8 3-3.8zM418.2 62.3l-3.8 3 3.8 3zM431.3 62.3l3.8 3-3.8 3z" fill="#333"/>
<!-- 13 new component -->
<path d="M450 60l2.2-2.8h8.5l-2.2 2.8z" fill="#8ccafc"/><path d="M450 60h8.5v8.1h-8.5z" fill="#6aafe6"/><path d="M458.5 60l2.2-2.8v8l-2.2 2.9z" fill="#4a90cf"/>
<path d="M450 68.1h8.5v7.5h-8.5z" fill="#e2e2e2" stroke="#999" stroke-width=".6"/><path d="M458.5 68.1h7.8v7.5h-7.8z" fill="#dcdcdc" stroke="#999" stroke-width=".6"/><path d="M458.5 68.1l2.5-2.8h7.8l-2.5 2.8z" fill="#f5f5f5" stroke="#999" stroke-width=".6"/><path d="M466.3 68.1l2.5-2.8v7.5l-2.5 2.8z" fill="#bdbdbd" stroke="#999" stroke-width=".6"/>
<path d="M465.7 54.7l1.2 3.1 3-1.4-1.3 3 3.1 1.3-3.1 1.2 1.3 3.1-3-1.4-1.2 3.1-1.2-3.1-3 1.4 1.3-3.1-3.1-1.2 3.1-1.3-1.3-3 3 1.4z" fill="#f7a500" stroke="#fbe3b0" stroke-width=".4"/>
<!-- 14 joint -->
<path d="M480 61.9l4.75-5.3 3.75-.35v6.85l-3.5 1.9v5l-4.6 4z" fill="#d4d4d4" stroke="#8c8c8c" stroke-width=".8" stroke-linejoin="round"/><path d="M484.75 56.6v13.4" stroke="#aaa" stroke-width=".6"/>
<path d="M490.4 62.5l3.7-5 4.7 4.7v12.2l-4.7-4.4h-3.7z" fill="#d4d4d4" stroke="#8c8c8c" stroke-width=".8" stroke-linejoin="round"/><path d="M494.1 57.5v12.5" stroke="#aaa" stroke-width=".6"/>
<path d="M486.3 65.3v3M492.2 60.3v3" stroke="#5db0ee" stroke-width="1.2"/>
<!-- 15 construct -->
<path d="M530.1 60.8l6.3-6.1 5.2.5-5.7 5.6z" fill="#f5f5f5" stroke="#8c8c8c" stroke-width=".8" stroke-linejoin="round"/><path d="M530.1 60.8h5.8v14.5h-5.8z" fill="#dedede" stroke="#8c8c8c" stroke-width=".8" stroke-linejoin="round"/>
<path d="M535.9 60.8l6.1-5.6v14.5l-6.1 5.1z" fill="#5ac47c"/>
<path d="M544.1 60.8l5.9-5.6v13.1l-5.9 6.8z" fill="#e8965a"/>
<!-- 16 inspect -->
<path d="M590.1 60.3v5.2M608.4 60.3v5.2" stroke="#666" stroke-width=".9" fill="none"/><path d="M592 63h14.5" stroke="#999" stroke-width=".9"/><path d="M593 61.5l-2.3 1.5 2.3 1.5zM605.5 61.5l2.3 1.5-2.3 1.5z" fill="#444"/>
<rect x="590.1" y="67.2" width="18.5" height="3.5" fill="#f7a500"/><path d="M592.5 67.2v1.5M595 67.2v1.5M597.5 67.2v1.5M600 67.2v1.5M602.5 67.2v1.5M605 67.2v1.5M607 67.2v1.5" stroke="#c47f00" stroke-width=".5"/>
<!-- 17 insert -->
<rect x="638.8" y="55.2" width="19.2" height="19.6" fill="#7ec5fa"/><path d="M638.8 74.8v-7l5.6-4.3 5.6 6.5 3.8-2.8 4.2 4.2v3.4z" fill="#3a8fd0"/><circle cx="652.7" cy="60.8" r="2" fill="#fdf6b8"/>
<!-- 18 select -->
<rect x="686.6" y="55.2" width="17.8" height="14" fill="none" stroke="#5fc878" stroke-width="1.1" stroke-dasharray="2.6 1.5"/>
<path d="M700.2 64.5v9l2.2-1.8 1.5 3.3 1.5-.7-1.5-3.2 2.9-.2z" fill="#fff" stroke="#333" stroke-width=".8" stroke-linejoin="round"/>
</svg>
<div class="phead" style="top:96px"><span style="font-size:7.8px;transform:scaleX(0.8487);transform-origin:0 50%">BROWSER</span></div>
<div class="row" style="left:27px;top:116px;width:173px"></div><div class="abs" style="left:43px;top:117.5px;width:140px;height:10.5px;background:#8e8e8e"></div><div class="abs" style="left:65.6px;top:118px;line-height:9px;font-weight:bold;color:#fff;white-space:nowrap;font-size:7.7px;transform:scaleX(0.9825);transform-origin:0 50%">Deep Algae Bloom Detector v8</div>
<div class="row" style="left:39px;top:131.5px;width:89px"><span style="left:21.5px;font-size:7.7px;transform:scaleX(0.9222);transform-origin:0 50%">Document Settings</span></div>
<div class="row" style="left:39px;top:147.5px;width:73px"><span style="left:21.5px;font-size:7.7px;transform:scaleX(0.9536);transform-origin:0 50%">Named Views</span></div>
<div class="row" style="left:39px;top:163.5px;width:63px"><span style="left:38.3px;font-size:7.7px;transform:scaleX(0.9018);transform-origin:0 50%">Origin</span></div>
<div class="row" style="left:39px;top:179.5px;width:73px"><span style="left:38.3px;font-size:7.7px;transform:scaleX(0.9672);transform-origin:0 50%">Analysis</span></div>
<div class="row" style="left:39px;top:195.5px;width:68px"><span style="left:38.3px;font-size:7.7px;transform:scaleX(0.9228);transform-origin:0 50%">Bodies</span></div>
<div class="row" style="left:51px;top:211.5px;width:65px"><span style="left:38.5px;font-size:7.7px;transform:scaleX(0.894);transform-origin:0 50%">Body1</span></div>
<div class="row" style="left:51px;top:227.5px;width:65px"><span style="left:38.5px;font-size:7.7px;transform:scaleX(0.9307);transform-origin:0 50%">Body2</span></div>
<div class="row" style="left:39px;top:243.5px;width:76px"><span style="left:38.3px;font-size:7.7px;transform:scaleX(0.9391);transform-origin:0 50%">Sketches</span></div>
<div class="row" style="left:39px;top:259.5px;width:87px"><span style="left:38.3px;font-size:7.7px;transform:scaleX(0.9408);transform-origin:0 50%">Construction</span></div>
<svg class="ico" style="left:0;top:94px" width="210" height="190" viewBox="0 94 210 190"><path d="M6.3 104.5l3.3-2.3v4.6zM9.8 104.5l3.3-2.3v4.6z" fill="#2e2e2e"/><circle cx="191.5" cy="104.2" r="3.1" fill="#2a2a2a"/><path d="M190 104.2h3" stroke="#e8e8e8" stroke-width=".8"/><path d="M199.3 100.5v7.5" stroke="#999" stroke-width=".9"/><path d="M199.8 101.5h1.7v5.5h-1.7z" fill="#c4c4c4"/><path d="M21 118.5v7.5h-8z" fill="#555" stroke="#333" stroke-width=".8" stroke-linejoin="round"/><path d="M19.8 122v3h-3.2z" fill="#ddd"/><g transform="translate(33.5,122.5)"><path d="M-5 0c2.2-3.6 7.8-3.6 10 0-2.2 3.6-7.8 3.6-10 0z" fill="#8d8d8d"/><circle r="2.3" fill="#f1f1f1"/><circle r="1.4" fill="#8d8d8d"/></g><path d="M45.5 119.5l2-2h7.5v8l-2 2h-7.5z" fill="#fff" stroke="#666" stroke-width=".8"/><path d="M45.5 119.5h7.5v8M53 119.5l2-2" fill="none" stroke="#999" stroke-width=".6"/><circle cx="190.5" cy="122.5" r="4" fill="#fff" stroke="#333" stroke-width=".9"/><circle cx="190.5" cy="122.5" r="1.6" fill="#333"/><path d="M27.5 134l5 4.5-5 4.5z" fill="#fff" stroke="#444" stroke-width="1.1" stroke-linejoin="round"/><path d="M51.37 137.97 L51.37 139.03 L49.64 139.6 L49.35 140.29 L50.17 141.93 L49.43 142.67 L47.79 141.85 L47.1 142.14 L46.53 143.87 L45.47 143.87 L44.9 142.14 L44.21 141.85 L42.57 142.67 L41.83 141.93 L42.65 140.29 L42.36 139.6 L40.63 139.03 L40.63 137.97 L42.36 137.4 L42.65 136.71 L41.83 135.07 L42.57 134.33 L44.21 135.15 L44.9 134.86 L45.47 133.13 L46.53 133.13 L47.1 134.86 L47.79 135.15 L49.43 134.33 L50.17 135.07 L49.35 136.71 L49.64 137.4z" fill="#8a8a8a"/><circle cx="46" cy="138.5" r="1.9" fill="#f1f1f1"/><path d="M27.5 150l5 4.5-5 4.5z" fill="#fff" stroke="#444" stroke-width="1.1" stroke-linejoin="round"/><path d="M40.8 150.5h3.8l1 1.3h5.6v6.7h-10.4z" fill="#959595"/><path d="M40.8 152.7h10.4" stroke="#bdbdbd" stroke-width=".6"/><path d="M27.5 166l5 4.5-5 4.5z" fill="#fff" stroke="#444" stroke-width="1.1" stroke-linejoin="round"/><g transform="translate(46,170.5)" fill="none" stroke="#c4c4c4" stroke-width=".8"><path d="M-5 0c2.2-3.6 7.8-3.6 10 0-2.2 3.6-7.8 3.6-10 0z"/><circle r="1.7"/><path d="M-3.5 3.2l7-6.4"/></g><path d="M56.8 166.5h3.8l1 1.3h5.6v6.7h-10.4z" fill="#959595"/><path d="M56.8 168.7h10.4" stroke="#bdbdbd" stroke-width=".6"/><path d="M27.5 182l5 4.5-5 4.5z" fill="#fff" stroke="#444" stroke-width="1.1" stroke-linejoin="round"/><g transform="translate(46,186.5)" fill="none" stroke="#c4c4c4" stroke-width=".8"><path d="M-5 0c2.2-3.6 7.8-3.6 10 0-2.2 3.6-7.8 3.6-10 0z"/><circle r="1.7"/><path d="M-3.5 3.2l7-6.4"/></g><path d="M56.8 182.5h3.8l1 1.3h5.6v6.7h-10.4z" fill="#959595"/><path d="M56.8 184.7h10.4" stroke="#bdbdbd" stroke-width=".6"/><path d="M33 198.5v7.5h-8z" fill="#555" stroke="#333" stroke-width=".8" stroke-linejoin="round"/><path d="M31.8 202v3h-3.2z" fill="#ddd"/><g transform="translate(46,202.5)"><path d="M-5 0c2.2-3.6 7.8-3.6 10 0-2.2 3.6-7.8 3.6-10 0z" fill="#8d8d8d"/><circle r="2.3" fill="#f1f1f1"/><circle r="1.4" fill="#8d8d8d"/></g><path d="M56.8 198.5h3.8l1 1.3h5.6v6.7h-10.4z" fill="#959595"/><path d="M56.8 200.7h10.4" stroke="#bdbdbd" stroke-width=".6"/><g transform="translate(58,218.5)"><path d="M-5 0c2.2-3.6 7.8-3.6 10 0-2.2 3.6-7.8 3.6-10 0z" fill="#8d8d8d"/><circle r="2.3" fill="#f1f1f1"/><circle r="1.4" fill="#8d8d8d"/></g><rect x="69.5" y="213.5" width="9.5" height="10" rx="2.2" fill="#fff" stroke="#555" stroke-width=".9"/><path d="M71.5 216h4.5v5.5h-4.5z" fill="#d9d9d9"/><path d="M76 216v5.5" stroke="#bbb" stroke-width="1"/><g transform="translate(58,234.5)" fill="none" stroke="#c4c4c4" stroke-width=".8"><path d="M-5 0c2.2-3.6 7.8-3.6 10 0-2.2 3.6-7.8 3.6-10 0z"/><circle r="1.7"/><path d="M-3.5 3.2l7-6.4"/></g><rect x="69.5" y="229.5" width="9.5" height="10" rx="2.2" fill="#fff" stroke="#555" stroke-width=".9"/><path d="M71.5 232h4.5v5.5h-4.5z" fill="#d9d9d9"/><path d="M76 232v5.5" stroke="#bbb" stroke-width="1"/><path d="M27.5 246l5 4.5-5 4.5z" fill="#fff" stroke="#444" stroke-width="1.1" stroke-linejoin="round"/><g transform="translate(46,250.5)"><path d="M-5 0c2.2-3.6 7.8-3.6 10 0-2.2 3.6-7.8 3.6-10 0z" fill="#8d8d8d"/><circle r="2.3" fill="#f1f1f1"/><circle r="1.4" fill="#8d8d8d"/></g><path d="M56.8 246.5h3.8l1 1.3h5.6v6.7h-10.4z" fill="#959595"/><path d="M56.8 248.7h10.4" stroke="#bdbdbd" stroke-width=".6"/><path d="M27.5 262l5 4.5-5 4.5z" fill="#fff" stroke="#444" stroke-width="1.1" stroke-linejoin="round"/><g transform="translate(46,266.5)"><path d="M-5 0c2.2-3.6 7.8-3.6 10 0-2.2 3.6-7.8 3.6-10 0z" fill="#8d8d8d"/><circle r="2.3" fill="#f1f1f1"/><circle r="1.4" fill="#8d8d8d"/></g><path d="M56.8 262.5h3.8l1 1.3h5.6v6.7h-10.4z" fill="#959595"/><path d="M56.8 264.7h10.4" stroke="#bdbdbd" stroke-width=".6"/></svg>
<div class="phead" style="top:491.5px;border-color:#dadada"><span style="font-size:7.8px;transform:scaleX(0.8245);transform-origin:0 50%">COMMENTS</span></div>
<svg class="ico" style="left:180px;top:491px" width="30" height="16" viewBox="180 491 30 16"><circle cx="191.5" cy="499.3" r="3.1" fill="#2a2a2a"/><path d="M189.9 499.3h3.2M191.5 497.7v3.2" stroke="#e8e8e8" stroke-width=".8"/><path d="M199.3 495.5v7.5" stroke="#999" stroke-width=".9"/><path d="M199.8 496.5h1.7v5.5h-1.7z" fill="#c4c4c4"/></svg>
<div id="nav" class="abs"></div><div class="abs" style="left:472px;top:492px;width:17px;height:16px;background:#0d94d6"></div>
<svg class="ico" style="left:430px;top:490px" width="165" height="20" viewBox="430 490 165 20"><path d="M440.5 493.5v12.5" stroke="#444" stroke-width="1.2"/><path d="M438.5 495.5l2-2.5 2 2.5z" fill="#444"/><ellipse cx="440.5" cy="501" rx="5" ry="2" fill="none" stroke="#444" stroke-width="1"/><path d="M434.5 502.5l1-3 2 2.5z" fill="#444"/><path d="M448.5 499h4l-2 2.6z" fill="#222"/><rect x="457" y="497" width="9.5" height="7.5" rx="1" fill="none" stroke="#555" stroke-width="1.1"/><rect x="459" y="500" width="5.5" height="2.5" fill="#777"/><path d="M458 496.5l2-2 1 1.5 2-1.5 1 1.5 2-.5" fill="none" stroke="#555" stroke-width=".9"/><path d="M476.5 502.5l-1.5-3c-.4-.9.7-1.5 1.3-.7l1 1.5v-5c0-1 1.4-1 1.4 0v-1c0-1 1.4-1 1.4 0v1c0-1 1.4-1 1.4 0v1c0-.9 1.3-.9 1.3 0v5c0 2.5-1 4-3.5 4-1.8 0-2.8-.8-3.8-2.8z" fill="#fff" stroke="#124" stroke-width=".5"/><circle cx="496.5" cy="498.5" r="3.6" fill="#e8f3fb" stroke="#555" stroke-width="1"/><path d="M499.2 501.2l3.3 3.3" stroke="#333" stroke-width="1.7"/><path d="M501.5 494.5v3.5M500.2 496h2.6M500.2 499.2h2.6" stroke="#333" stroke-width=".7"/><rect x="509.5" y="493.5" width="10" height="10" fill="none" stroke="#666" stroke-width=".7" stroke-dasharray="1.2 1"/><circle cx="513.8" cy="498" r="4" fill="#e8f3fb" stroke="#555" stroke-width="1"/><path d="M516.7 501l3.3 3.3" stroke="#333" stroke-width="1.7"/><path d="M522.5 499h4l-2 2.6z" fill="#222"/><rect x="531" y="495" width="10" height="7.5" fill="#a4c1ea" stroke="#7a7a7a" stroke-width="1.5"/><path d="M534.5 503.5v1.5h3v-1.5M533 505.5h6" stroke="#6a6a6a" stroke-width="1" fill="none"/><path d="M543 499h4l-2 2.6z" fill="#222"/><rect x="551.5" y="494.5" width="10" height="10" fill="#c9c9c9" stroke="#444" stroke-width=".8"/><path d="M554 494.5v10M556.5 494.5v10M559 494.5v10M551.5 497h10M551.5 499.5h10M551.5 502h10" stroke="#444" stroke-width=".6"/><path d="M563.5 499h4l-2 2.6z" fill="#222"/><rect x="572" y="494.5" width="10" height="9" fill="#86a7dc" stroke="#4a69a5" stroke-width=".9"/><path d="M577 494.5v9M572 499h10" stroke="#4a69a5" stroke-width=".9"/><path d="M584 499h4l-2 2.6z" fill="#222"/></svg>
<div id="tl" class="abs"></div>
<svg class="ico" style="left:0;top:510px" width="1024" height="34" viewBox="0 510 1024 34"><g fill="#2b2b2b"><rect x="7" y="522.5" width="1.6" height="9"/><path d="M15.5 522.5v9l-6.5-4.5z"/><path d="M29.5 523v8l-6-4z"/><rect x="30.3" y="525" width="1.6" height="4"/><path d="M40.5 522v10l8-5z"/><path d="M58.5 523v8l6-4z"/><rect x="56" y="525" width="1.6" height="4"/><path d="M73.5 522.5v9l6.5-4.5z"/><rect x="80.4" y="522.5" width="1.6" height="9"/></g><path d="M102 537.7h705" stroke="#c6c6c6" stroke-width="1.3"/><path d="M102.5 533.8v3.7M118.5 533.8v3.7M134.5 533.8v3.7M150.5 533.8v3.7M166.5 533.8v3.7M182.5 533.8v3.7M198.5 533.8v3.7M214.5 533.8v3.7M230.5 533.8v3.7M246.5 533.8v3.7M262.5 533.8v3.7M278.5 533.8v3.7M294.5 533.8v3.7M310.5 533.8v3.7M326.5 533.8v3.7M342.5 533.8v3.7M358.5 533.8v3.7M374.5 533.8v3.7M390.5 533.8v3.7M406.5 533.8v3.7M422.5 533.8v3.7M438.5 533.8v3.7M454.5 533.8v3.7M470.5 533.8v3.7M486.5 533.8v3.7M502.5 533.8v3.7M518.5 533.8v3.7M534.5 533.8v3.7M550.5 533.8v3.7M566.5 533.8v3.7M582.5 533.8v3.7M598.5 533.8v3.7M614.5 533.8v3.7M630.5 533.8v3.7M646.5 533.8v3.7M662.5 533.8v3.7M678.5 533.8v3.7M694.5 533.8v3.7M710.5 533.8v3.7M726.5 533.8v3.7M742.5 533.8v3.7M758.5 533.8v3.7M774.5 533.8v3.7M790.5 533.8v3.7M806.5 533.8v3.7" stroke="#c4c4c4" stroke-width="1"/><rect x="97.8" y="521.8" width="9" height="9" fill="#f6f6f6" stroke="#777" stroke-width=".8" stroke-dasharray="2.2 1"/><g fill="#3a93dc"><rect x="96.8" y="520.8" width="2" height="2"/><rect x="105.8" y="520.8" width="2" height="2"/><rect x="96.8" y="529.8" width="2" height="2"/></g><path d="M103.1 531.5999999999999l3.6-3.8 1.3 1.2-3.6 3.8z" fill="#f2a52a"/><path d="M106.7 527.8l.9-.9 1.3 1.2-.9.9z" fill="#ea3f3a"/><path d="M103.1 531.5999999999999l1.3 1.2-1.7.500z" fill="#444"/><path d="M113.3 523.3l1.7-1.8h6.6l-1.7 1.8z" fill="#8ccafc"/><path d="M113.3 523.3h6.6v7h-6.6z" fill="#5aa5e3"/><path d="M119.9 523.3l1.7-1.8v7l-1.7 1.8z" fill="#3f86c8"/><path d="M113.3 530.5999999999999h6.6l1.7-1.8v1l-1.7 1.9h-6.6z" fill="#b5b5b5"/><path d="M122.9 522v7.5" stroke="#707070" stroke-width="1.4"/><path d="M129.5 523.3l2-2h8.5l-2 2z" fill="#eee" stroke="#666" stroke-width=".6"/><path d="M138 523.3l2-2v8.5l-2 2z" fill="#aaa" stroke="#666" stroke-width=".6"/><path d="M129.5 523.3h8.5v8.5h-8.5z" fill="#e2e2e2" stroke="#666" stroke-width=".6"/><path d="M131 524.8h5.5v5.5h-5.5z" fill="#8cc3ee"/><path d="M131 524.8h2v5.5h-2zM131 528.3h5.5v2h-5.5z" fill="#3679bb"/><rect x="145.8" y="521.8" width="9" height="9" fill="#f6f6f6" stroke="#777" stroke-width=".8" stroke-dasharray="2.2 1"/><g fill="#3a93dc"><rect x="144.8" y="520.8" width="2" height="2"/><rect x="153.8" y="520.8" width="2" height="2"/><rect x="144.8" y="529.8" width="2" height="2"/></g><path d="M151.1 531.5999999999999l3.6-3.8 1.3 1.2-3.6 3.8z" fill="#f2a52a"/><path d="M154.7 527.8l.9-.9 1.3 1.2-.9.9z" fill="#ea3f3a"/><path d="M151.1 531.5999999999999l1.3 1.2-1.7.500z" fill="#444"/><path d="M161.3 523.3l1.7-1.8h6.6l-1.7 1.8z" fill="#8ccafc"/><path d="M161.3 523.3h6.6v7h-6.6z" fill="#5aa5e3"/><path d="M167.9 523.3l1.7-1.8v7l-1.7 1.8z" fill="#3f86c8"/><path d="M161.3 530.5999999999999h6.6l1.7-1.8v1l-1.7 1.9h-6.6z" fill="#b5b5b5"/><path d="M170.9 522v7.5" stroke="#707070" stroke-width="1.4"/><rect x="177.8" y="521.8" width="9" height="9" fill="#f6f6f6" stroke="#777" stroke-width=".8" stroke-dasharray="2.2 1"/><g fill="#3a93dc"><rect x="176.8" y="520.8" width="2" height="2"/><rect x="185.8" y="520.8" width="2" height="2"/><rect x="176.8" y="529.8" width="2" height="2"/></g><path d="M183.1 531.5999999999999l3.6-3.8 1.3 1.2-3.6 3.8z" fill="#f2a52a"/><path d="M186.7 527.8l.9-.9 1.3 1.2-.9.9z" fill="#ea3f3a"/><path d="M183.1 531.5999999999999l1.3 1.2-1.7.500z" fill="#444"/><path d="M193.3 523.3l1.7-1.8h6.6l-1.7 1.8z" fill="#8ccafc"/><path d="M193.3 523.3h6.6v7h-6.6z" fill="#5aa5e3"/><path d="M199.9 523.3l1.7-1.8v7l-1.7 1.8z" fill="#3f86c8"/><path d="M193.3 530.5999999999999h6.6l1.7-1.8v1l-1.7 1.9h-6.6z" fill="#b5b5b5"/><path d="M202.9 522v7.5" stroke="#707070" stroke-width="1.4"/><rect x="209.8" y="521.8" width="9" height="9" fill="#f6f6f6" stroke="#777" stroke-width=".8" stroke-dasharray="2.2 1"/><g fill="#3a93dc"><rect x="208.8" y="520.8" width="2" height="2"/><rect x="217.8" y="520.8" width="2" height="2"/><rect x="208.8" y="529.8" width="2" height="2"/></g><path d="M215.1 531.5999999999999l3.6-3.8 1.3 1.2-3.6 3.8z" fill="#f2a52a"/><path d="M218.7 527.8l.9-.9 1.3 1.2-.9.9z" fill="#ea3f3a"/><path d="M215.1 531.5999999999999l1.3 1.2-1.7.500z" fill="#444"/><path d="M225.3 523.3l1.7-1.8h6.6l-1.7 1.8z" fill="#8ccafc"/><path d="M225.3 523.3h6.6v7h-6.6z" fill="#5aa5e3"/><path d="M231.9 523.3l1.7-1.8v7l-1.7 1.8z" fill="#3f86c8"/><path d="M225.3 530.5999999999999h6.6l1.7-1.8v1l-1.7 1.9h-6.6z" fill="#b5b5b5"/><path d="M234.9 522v7.5" stroke="#707070" stroke-width="1.4"/><rect x="241.8" y="521.8" width="9" height="9" fill="#f6f6f6" stroke="#777" stroke-width=".8" stroke-dasharray="2.2 1"/><g fill="#3a93dc"><rect x="240.8" y="520.8" width="2" height="2"/><rect x="249.8" y="520.8" width="2" height="2"/><rect x="240.8" y="529.8" width="2" height="2"/></g><path d="M247.1 531.5999999999999l3.6-3.8 1.3 1.2-3.6 3.8z" fill="#f2a52a"/><path d="M250.7 527.8l.9-.9 1.3 1.2-.9.9z" fill="#ea3f3a"/><path d="M247.1 531.5999999999999l1.3 1.2-1.7.500z" fill="#444"/><path d="M257.3 523.3l1.7-1.8h6.6l-1.7 1.8z" fill="#8ccafc"/><path d="M257.3 523.3h6.6v7h-6.6z" fill="#5aa5e3"/><path d="M263.9 523.3l1.7-1.8v7l-1.7 1.8z" fill="#3f86c8"/><path d="M257.3 530.5999999999999h6.6l1.7-1.8v1l-1.7 1.9h-6.6z" fill="#b5b5b5"/><path d="M266.9 522v7.5" stroke="#707070" stroke-width="1.4"/><ellipse cx="278.8" cy="526.8" rx="4.8" ry="4" fill="#e6e6e6" stroke="#4db36e" stroke-width="1.8"/><path d="M277.5 521.3l2.3-.5v9.5l-2.3.8z" fill="#e9975a"/><path d="M279.8 524.3h2v4.5h-2z" fill="#c9c9c9"/><rect x="289.8" y="521.8" width="9" height="9" fill="#f6f6f6" stroke="#777" stroke-width=".8" stroke-dasharray="2.2 1"/><g fill="#3a93dc"><rect x="288.8" y="520.8" width="2" height="2"/><rect x="297.8" y="520.8" width="2" height="2"/><rect x="288.8" y="529.8" width="2" height="2"/></g><path d="M295.1 531.5999999999999l3.6-3.8 1.3 1.2-3.6 3.8z" fill="#f2a52a"/><path d="M298.7 527.8l.9-.9 1.3 1.2-.9.9z" fill="#ea3f3a"/><path d="M295.1 531.5999999999999l1.3 1.2-1.7.500z" fill="#444"/><path d="M305.3 523.3l1.7-1.8h6.6l-1.7 1.8z" fill="#8ccafc"/><path d="M305.3 523.3h6.6v7h-6.6z" fill="#5aa5e3"/><path d="M311.9 523.3l1.7-1.8v7l-1.7 1.8z" fill="#3f86c8"/><path d="M305.3 530.5999999999999h6.6l1.7-1.8v1l-1.7 1.9h-6.6z" fill="#b5b5b5"/><path d="M314.9 522v7.5" stroke="#707070" stroke-width="1.4"/><path d="M321.3 523.3l1.7-1.8h6.6l-1.7 1.8z" fill="#8ccafc"/><path d="M321.3 523.3h6.6v7h-6.6z" fill="#5aa5e3"/><path d="M327.9 523.3l1.7-1.8v7l-1.7 1.8z" fill="#3f86c8"/><path d="M321.3 530.5999999999999h6.6l1.7-1.8v1l-1.7 1.9h-6.6z" fill="#b5b5b5"/><path d="M330.9 522v7.5" stroke="#707070" stroke-width="1.4"/><rect x="337.8" y="521.8" width="9" height="9" fill="#f6f6f6" stroke="#777" stroke-width=".8" stroke-dasharray="2.2 1"/><g fill="#3a93dc"><rect x="336.8" y="520.8" width="2" height="2"/><rect x="345.8" y="520.8" width="2" height="2"/><rect x="336.8" y="529.8" width="2" height="2"/></g><path d="M343.1 531.5999999999999l3.6-3.8 1.3 1.2-3.6 3.8z" fill="#f2a52a"/><path d="M346.7 527.8l.9-.9 1.3 1.2-.9.9z" fill="#ea3f3a"/><path d="M343.1 531.5999999999999l1.3 1.2-1.7.500z" fill="#444"/><path d="M353.3 523.3l1.7-1.8h6.6l-1.7 1.8z" fill="#8ccafc"/><path d="M353.3 523.3h6.6v7h-6.6z" fill="#5aa5e3"/><path d="M359.9 523.3l1.7-1.8v7l-1.7 1.8z" fill="#3f86c8"/><path d="M353.3 530.5999999999999h6.6l1.7-1.8v1l-1.7 1.9h-6.6z" fill="#b5b5b5"/><path d="M362.9 522v7.5" stroke="#707070" stroke-width="1.4"/><rect x="369.8" y="521.8" width="9" height="9" fill="#f6f6f6" stroke="#777" stroke-width=".8" stroke-dasharray="2.2 1"/><g fill="#3a93dc"><rect x="368.8" y="520.8" width="2" height="2"/><rect x="377.8" y="520.8" width="2" height="2"/><rect x="368.8" y="529.8" width="2" height="2"/></g><path d="M375.1 531.5999999999999l3.6-3.8 1.3 1.2-3.6 3.8z" fill="#f2a52a"/><path d="M378.7 527.8l.9-.9 1.3 1.2-.9.9z" fill="#ea3f3a"/><path d="M375.1 531.5999999999999l1.3 1.2-1.7.500z" fill="#444"/><path d="M385.3 523.3l1.7-1.8h6.6l-1.7 1.8z" fill="#8ccafc"/><path d="M385.3 523.3h6.6v7h-6.6z" fill="#5aa5e3"/><path d="M391.9 523.3l1.7-1.8v7l-1.7 1.8z" fill="#3f86c8"/><path d="M385.3 530.5999999999999h6.6l1.7-1.8v1l-1.7 1.9h-6.6z" fill="#b5b5b5"/><path d="M394.9 522v7.5" stroke="#707070" stroke-width="1.4"/><rect x="401.8" y="521.8" width="9" height="9" fill="#f6f6f6" stroke="#777" stroke-width=".8" stroke-dasharray="2.2 1"/><g fill="#3a93dc"><rect x="400.8" y="520.8" width="2" height="2"/><rect x="409.8" y="520.8" width="2" height="2"/><rect x="400.8" y="529.8" width="2" height="2"/></g><path d="M407.1 531.5999999999999l3.6-3.8 1.3 1.2-3.6 3.8z" fill="#f2a52a"/><path d="M410.7 527.8l.9-.9 1.3 1.2-.9.9z" fill="#ea3f3a"/><path d="M407.1 531.5999999999999l1.3 1.2-1.7.500z" fill="#444"/><path d="M417.3 523.3l1.7-1.8h6.6l-1.7 1.8z" fill="#8ccafc"/><path d="M417.3 523.3h6.6v7h-6.6z" fill="#5aa5e3"/><path d="M423.9 523.3l1.7-1.8v7l-1.7 1.8z" fill="#3f86c8"/><path d="M417.3 530.5999999999999h6.6l1.7-1.8v1l-1.7 1.9h-6.6z" fill="#b5b5b5"/><path d="M426.9 522v7.5" stroke="#707070" stroke-width="1.4"/><path d="M433.3 523.3l1.7-1.8h6.6l-1.7 1.8z" fill="#8ccafc"/><path d="M433.3 523.3h6.6v7h-6.6z" fill="#5aa5e3"/><path d="M439.9 523.3l1.7-1.8v7l-1.7 1.8z" fill="#3f86c8"/><path d="M433.3 530.5999999999999h6.6l1.7-1.8v1l-1.7 1.9h-6.6z" fill="#b5b5b5"/><path d="M442.9 522v7.5" stroke="#707070" stroke-width="1.4"/><path d="M449.3 523.3l1.7-1.8h6.6l-1.7 1.8z" fill="#8ccafc"/><path d="M449.3 523.3h6.6v7h-6.6z" fill="#5aa5e3"/><path d="M455.9 523.3l1.7-1.8v7l-1.7 1.8z" fill="#3f86c8"/><path d="M449.3 530.5999999999999h6.6l1.7-1.8v1l-1.7 1.9h-6.6z" fill="#b5b5b5"/><path d="M458.9 522v7.5" stroke="#707070" stroke-width="1.4"/><path d="M465 524.8l2.8-3.5h2l-1.8 3.5v6.5h-3z" fill="#e0e0e0" stroke="#888" stroke-width=".7" stroke-linejoin="round"/><path d="M468 524.8l2.8-3.3v7l-2.8 2.8z" fill="#4fbd74"/><path d="M472.3 524.8l3.2-3.5v7l-3.2 3.5z" fill="#e9935a"/><rect x="481.8" y="521.8" width="9" height="9" fill="#f6f6f6" stroke="#777" stroke-width=".8" stroke-dasharray="2.2 1"/><g fill="#3a93dc"><rect x="480.8" y="520.8" width="2" height="2"/><rect x="489.8" y="520.8" width="2" height="2"/><rect x="480.8" y="529.8" width="2" height="2"/></g><path d="M487.1 531.5999999999999l3.6-3.8 1.3 1.2-3.6 3.8z" fill="#f2a52a"/><path d="M490.7 527.8l.9-.9 1.3 1.2-.9.9z" fill="#ea3f3a"/><path d="M487.1 531.5999999999999l1.3 1.2-1.7.500z" fill="#444"/><path d="M497.3 523.3l1.7-1.8h6.6l-1.7 1.8z" fill="#8ccafc"/><path d="M497.3 523.3h6.6v7h-6.6z" fill="#5aa5e3"/><path d="M503.9 523.3l1.7-1.8v7l-1.7 1.8z" fill="#3f86c8"/><path d="M497.3 530.5999999999999h6.6l1.7-1.8v1l-1.7 1.9h-6.6z" fill="#b5b5b5"/><path d="M506.9 522v7.5" stroke="#707070" stroke-width="1.4"/><rect x="513.8" y="521.8" width="9" height="9" fill="#f6f6f6" stroke="#777" stroke-width=".8" stroke-dasharray="2.2 1"/><g fill="#3a93dc"><rect x="512.8" y="520.8" width="2" height="2"/><rect x="521.8" y="520.8" width="2" height="2"/><rect x="512.8" y="529.8" width="2" height="2"/></g><path d="M519.1 531.5999999999999l3.6-3.8 1.3 1.2-3.6 3.8z" fill="#f2a52a"/><path d="M522.7 527.8l.9-.9 1.3 1.2-.9.9z" fill="#ea3f3a"/><path d="M519.1 531.5999999999999l1.3 1.2-1.7.500z" fill="#444"/><path d="M529 524.8l2.8-3.5h2l-1.8 3.5v6.5h-3z" fill="#e0e0e0" stroke="#888" stroke-width=".7" stroke-linejoin="round"/><path d="M532 524.8l2.8-3.3v7l-2.8 2.8z" fill="#4fbd74"/><path d="M536.3 524.8l3.2-3.5v7l-3.2 3.5z" fill="#e9935a"/><rect x="545.8" y="521.8" width="9" height="9" fill="#f6f6f6" stroke="#777" stroke-width=".8" stroke-dasharray="2.2 1"/><g fill="#3a93dc"><rect x="544.8" y="520.8" width="2" height="2"/><rect x="553.8" y="520.8" width="2" height="2"/><rect x="544.8" y="529.8" width="2" height="2"/></g><path d="M551.1 531.5999999999999l3.6-3.8 1.3 1.2-3.6 3.8z" fill="#f2a52a"/><path d="M554.7 527.8l.9-.9 1.3 1.2-.9.9z" fill="#ea3f3a"/><path d="M551.1 531.5999999999999l1.3 1.2-1.7.500z" fill="#444"/><path d="M561 521h11v7.3l-1.5 1h-8l-1.5-1z" fill="#5aa5e3"/><path d="M561 521l2.5 1.8v5.5l-2.5-.8zM572 521l-2.5 1.8v5.5l2.5-.8z" fill="#3f86c8"/><path d="M561 521h11l-2.5 1.8h-6z" fill="#8ccafc"/><circle cx="566.5" cy="529.5999999999999" r="2.3" fill="#fff" stroke="#888" stroke-width=".7"/><path d="M577 523.0999999999999l1.8-2h4c3.5 0 5.7 2.3 5.7 5.5v3.2l-1.8 1.8h-9.7z" fill="#dadada" stroke="#888" stroke-width=".8" stroke-linejoin="round"/><path d="M582 520.9c4 0 6.5 2.3 6.5 6l-1.6 1.5c0-3.5-2-5.8-5.6-6z" fill="#4f9de0"/><rect x="593.8" y="521.8" width="9" height="9" fill="#f6f6f6" stroke="#777" stroke-width=".8" stroke-dasharray="2.2 1"/><g fill="#3a93dc"><rect x="592.8" y="520.8" width="2" height="2"/><rect x="601.8" y="520.8" width="2" height="2"/><rect x="592.8" y="529.8" width="2" height="2"/></g><path d="M599.1 531.5999999999999l3.6-3.8 1.3 1.2-3.6 3.8z" fill="#f2a52a"/><path d="M602.7 527.8l.9-.9 1.3 1.2-.9.9z" fill="#ea3f3a"/><path d="M599.1 531.5999999999999l1.3 1.2-1.7.500z" fill="#444"/><path d="M609.3 523.3l1.7-1.8h6.6l-1.7 1.8z" fill="#8ccafc"/><path d="M609.3 523.3h6.6v7h-6.6z" fill="#5aa5e3"/><path d="M615.9 523.3l1.7-1.8v7l-1.7 1.8z" fill="#3f86c8"/><path d="M609.3 530.5999999999999h6.6l1.7-1.8v1l-1.7 1.9h-6.6z" fill="#b5b5b5"/><path d="M618.9 522v7.5" stroke="#707070" stroke-width="1.4"/><path d="M625.3 523.3l1.7-1.8h6.6l-1.7 1.8z" fill="#8ccafc"/><path d="M625.3 523.3h6.6v7h-6.6z" fill="#5aa5e3"/><path d="M631.9 523.3l1.7-1.8v7l-1.7 1.8z" fill="#3f86c8"/><path d="M625.3 530.5999999999999h6.6l1.7-1.8v1l-1.7 1.9h-6.6z" fill="#b5b5b5"/><path d="M634.9 522v7.5" stroke="#707070" stroke-width="1.4"/><rect x="641.8" y="521.8" width="9" height="9" fill="#f6f6f6" stroke="#777" stroke-width=".8" stroke-dasharray="2.2 1"/><g fill="#3a93dc"><rect x="640.8" y="520.8" width="2" height="2"/><rect x="649.8" y="520.8" width="2" height="2"/><rect x="640.8" y="529.8" width="2" height="2"/></g><path d="M647.1 531.5999999999999l3.6-3.8 1.3 1.2-3.6 3.8z" fill="#f2a52a"/><path d="M650.7 527.8l.9-.9 1.3 1.2-.9.9z" fill="#ea3f3a"/><path d="M647.1 531.5999999999999l1.3 1.2-1.7.500z" fill="#444"/><path d="M657.3 523.3l1.7-1.8h6.6l-1.7 1.8z" fill="#8ccafc"/><path d="M657.3 523.3h6.6v7h-6.6z" fill="#5aa5e3"/><path d="M663.9 523.3l1.7-1.8v7l-1.7 1.8z" fill="#3f86c8"/><path d="M657.3 530.5999999999999h6.6l1.7-1.8v1l-1.7 1.9h-6.6z" fill="#b5b5b5"/><path d="M666.9 522v7.5" stroke="#707070" stroke-width="1.4"/><path d="M673 523.0999999999999l1.8-2h4c3.5 0 5.7 2.3 5.7 5.5v3.2l-1.8 1.8h-9.7z" fill="#dadada" stroke="#888" stroke-width=".8" stroke-linejoin="round"/><path d="M678 520.9c4 0 6.5 2.3 6.5 6l-1.6 1.5c0-3.5-2-5.8-5.6-6z" fill="#4f9de0"/><path d="M689 523.0999999999999l1.8-2h4c3.5 0 5.7 2.3 5.7 5.5v3.2l-1.8 1.8h-9.7z" fill="#dadada" stroke="#888" stroke-width=".8" stroke-linejoin="round"/><path d="M694 520.9c4 0 6.5 2.3 6.5 6l-1.6 1.5c0-3.5-2-5.8-5.6-6z" fill="#4f9de0"/><path d="M705 523.0999999999999l1.8-2h4c3.5 0 5.7 2.3 5.7 5.5v3.2l-1.8 1.8h-9.7z" fill="#dadada" stroke="#888" stroke-width=".8" stroke-linejoin="round"/><path d="M710 520.9c4 0 6.5 2.3 6.5 6l-1.6 1.5c0-3.5-2-5.8-5.6-6z" fill="#4f9de0"/><path d="M721 523.0999999999999l1.8-2h4c3.5 0 5.7 2.3 5.7 5.5v3.2l-1.8 1.8h-9.7z" fill="#dadada" stroke="#888" stroke-width=".8" stroke-linejoin="round"/><path d="M726 520.9c4 0 6.5 2.3 6.5 6l-1.6 1.5c0-3.5-2-5.8-5.6-6z" fill="#4f9de0"/><rect x="737.8" y="521.8" width="9" height="9" fill="#f6f6f6" stroke="#777" stroke-width=".8" stroke-dasharray="2.2 1"/><g fill="#3a93dc"><rect x="736.8" y="520.8" width="2" height="2"/><rect x="745.8" y="520.8" width="2" height="2"/><rect x="736.8" y="529.8" width="2" height="2"/></g><path d="M743.1 531.5999999999999l3.6-3.8 1.3 1.2-3.6 3.8z" fill="#f2a52a"/><path d="M746.7 527.8l.9-.9 1.3 1.2-.9.9z" fill="#ea3f3a"/><path d="M743.1 531.5999999999999l1.3 1.2-1.7.500z" fill="#444"/><path d="M753.3 523.3l1.7-1.8h6.6l-1.7 1.8z" fill="#8ccafc"/><path d="M753.3 523.3h6.6v7h-6.6z" fill="#5aa5e3"/><path d="M759.9 523.3l1.7-1.8v7l-1.7 1.8z" fill="#3f86c8"/><path d="M753.3 530.5999999999999h6.6l1.7-1.8v1l-1.7 1.9h-6.6z" fill="#b5b5b5"/><path d="M762.9 522v7.5" stroke="#707070" stroke-width="1.4"/><path d="M769.3 523.3l1.7-1.8h6.6l-1.7 1.8z" fill="#8ccafc"/><path d="M769.3 523.3h6.6v7h-6.6z" fill="#5aa5e3"/><path d="M775.9 523.3l1.7-1.8v7l-1.7 1.8z" fill="#3f86c8"/><path d="M769.3 530.5999999999999h6.6l1.7-1.8v1l-1.7 1.9h-6.6z" fill="#b5b5b5"/><path d="M778.9 522v7.5" stroke="#707070" stroke-width="1.4"/><path d="M785 523.0999999999999l1.8-2h4c3.5 0 5.7 2.3 5.7 5.5v3.2l-1.8 1.8h-9.7z" fill="#dadada" stroke="#888" stroke-width=".8" stroke-linejoin="round"/><path d="M790 520.9c4 0 6.5 2.3 6.5 6l-1.6 1.5c0-3.5-2-5.8-5.6-6z" fill="#4f9de0"/><path d="M801 523.0999999999999l1.8-2h4c3.5 0 5.7 2.3 5.7 5.5v3.2l-1.8 1.8h-9.7z" fill="#dadada" stroke="#888" stroke-width=".8" stroke-linejoin="round"/><path d="M806 520.9c4 0 6.5 2.3 6.5 6l-1.6 1.5c0-3.5-2-5.8-5.6-6z" fill="#4f9de0"/><path d="M810.5 517.5h8.5l-3.2 4.5h-2.1z" fill="#333"/><rect x="814" y="517.5" width="1.6" height="21" fill="#333"/></svg>
<svg class="ico" style="left:1000px;top:517px" width="20" height="20" viewBox="1000 517 20 20"><path d="M1015.37 526.97 L1015.37 528.03 L1013.64 528.6 L1013.35 529.29 L1014.17 530.93 L1013.43 531.67 L1011.79 530.85 L1011.1 531.14 L1010.53 532.87 L1009.47 532.87 L1008.9 531.14 L1008.21 530.85 L1006.57 531.67 L1005.83 530.93 L1006.65 529.29 L1006.36 528.6 L1004.63 528.03 L1004.63 526.97 L1006.36 526.4 L1006.65 525.71 L1005.83 524.07 L1006.57 523.33 L1008.21 524.15 L1008.9 523.86 L1009.47 522.13 L1010.53 522.13 L1011.1 523.86 L1011.79 524.15 L1013.43 523.33 L1014.17 524.07 L1013.35 525.71 L1013.64 526.4z" fill="#8a8a8a"/><circle cx="1010" cy="527.5" r="1.9" fill="#f1f1f1"/></svg>
</body></html>
